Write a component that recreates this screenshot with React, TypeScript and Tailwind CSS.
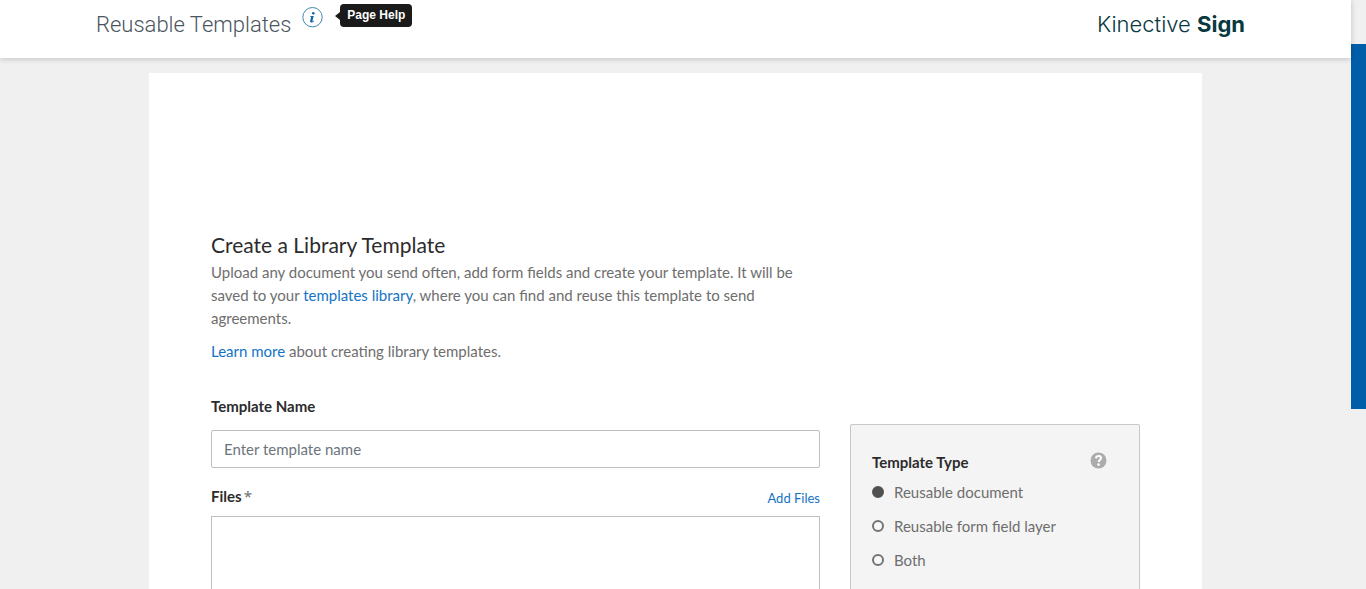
import { useState } from "react";

const templateTypes = [
  { id: "document", label: "Reusable document" },
  { id: "layer", label: "Reusable form field layer" },
  { id: "both", label: "Both" },
];

function Header() {
  return (
    <header className="relative z-10 flex h-[58px] shrink-0 items-start justify-between bg-white pr-[106px] pl-24 shadow-[0_1px_6px_rgba(0,0,0,0.2)]">
      <div className="flex items-start">
        <h1 className="pt-2 font-['Roboto',sans-serif] text-[22px] leading-[34px] font-light text-[#4a5560]">
          Reusable Templates
        </h1>
        <button type="button" aria-label="Page information" className="mt-[7px] ml-[11px]">
          <svg width="21" height="21" viewBox="0 0 21 21" fill="none" aria-hidden="true">
            <circle cx="10.5" cy="10.2" r="9.7" stroke="#4586ad" strokeWidth="1" />
            <circle cx="11.3" cy="6.3" r="1.3" fill="#0d65a5" />
            <path d="M8.4 9.1h3.3l-1.3 5c-.1.4.3.3 1.3-.6l.4.4c-1 1.2-1.9 1.6-2.8 1.6-1.1 0-1.4-.7-1.1-1.7l.9-3.6c.1-.4-.1-.5-.8-.5z" fill="#0d65a5" />
          </svg>
        </button>
        <div role="tooltip" className="mt-1 ml-3 flex items-center">
          <span className="h-0 w-0 border-y-4 border-r-[5px] border-y-transparent border-r-[#1a1a1a]" />
          <span className="rounded bg-[#1a1a1a] px-[7px] font-['Liberation_Sans',sans-serif] text-xs leading-[23px] font-bold text-white">
            Page Help
          </span>
        </div>
      </div>
      <div className="pt-2 font-['Inter',sans-serif] text-[22px] leading-8 text-[#07393f]">
        <span className="font-light">Kinective</span> <span className="font-bold">Sign</span>
      </div>
    </header>
  );
}

function TemplateTypePanel() {
  const [selected, setSelected] = useState("document");
  return (
    <fieldset className="h-60 w-[290px] shrink-0 rounded-xs border border-[#c8c8c8] bg-[#f4f4f4] pt-[25px] pr-8 pl-[21px]">
      <div className="flex items-start justify-between">
        <h3 className="text-[15px] leading-6 font-bold text-[#2c2c2c]">Template Type</h3>
        <button type="button" aria-label="Template type help" className="mt-0.5">
          <svg width="17" height="17" viewBox="0 0 17 17" fill="none" aria-hidden="true">
            <circle cx="8.5" cy="8.5" r="8" fill="#acacac" />
            <path d="M5.9 6.3C6.2 4.7 7.3 4 8.6 4c1.4 0 2.4.8 2.4 2.1 0 1.7-2.3 1.8-2.3 3.8" stroke="#fff" strokeWidth="2.1" />
            <circle cx="8.6" cy="12.6" r="1.3" fill="#fff" />
          </svg>
        </button>
      </div>
      <div className="mt-1.5 flex flex-col gap-[10px]">
        {templateTypes.map((type) => (
          <label key={type.id} className="flex items-center gap-[10px] text-[15px] leading-6 text-[#6e6e6e]">
            <input
              type="radio"
              name="template-type"
              checked={selected === type.id}
              onChange={() => setSelected(type.id)}
              className="h-3 w-3 appearance-none rounded-full border-2 border-[#747474] bg-[#f8f8f8] checked:border-[#505050] checked:bg-[#505050]"
            />
            {type.label}
          </label>
        ))}
      </div>
    </fieldset>
  );
}

export default function App() {
  return (
    <div className="flex h-screen overflow-hidden bg-[#f0f0f0] font-['Lato','Noto_Sans',sans-serif] text-[#6e6e6e]">
      <div className="flex min-w-0 flex-1 flex-col">
        <Header />
        <main className="mx-auto mt-[15px] w-full max-w-[1053px] flex-1 bg-white px-[62px] pt-[157px]">
          <section className="max-w-[590px] text-[15px] leading-[23px]">
            <h2 className="mb-0.5 text-[21px] leading-[29px] text-[#2c2c2c]">Create a Library Template</h2>
            <p>
              Upload any document you send often, add form fields and create your template. It will be saved to your{" "}
              <a href="#library" className="text-[#1473c6]">templates library</a>, where you can find and reuse this
              template to send agreements.
            </p>
            <p className="mt-[10px]">
              <a href="#learn" className="text-[#1473c6]">Learn more</a> about creating library templates.
            </p>
          </section>

          <form className="mt-[31px] flex items-start gap-[30px]">
            <div className="min-w-0 flex-1">
              <label htmlFor="template-name" className="block text-[15px] leading-6 font-bold text-[#2c2c2c]">
                Template Name
              </label>
              <input
                id="template-name"
                type="text"
                placeholder="Enter template name"
                className="mt-3 block h-[38px] w-full rounded-xs border border-[#bebebe] bg-white px-3 text-[15px] placeholder:text-[#6c757d]"
              />
              <div className="mt-4 flex items-start justify-between">
                <h3 className="text-[15px] leading-6 font-bold text-[#2c2c2c]">
                  Files<span className="ml-0.5 font-['Noto_Sans',sans-serif] font-normal text-[#6e6e6e]">*</span>
                </h3>
                <button type="button" className="text-[13px] leading-7 text-[#1473c6]">Add Files</button>
              </div>
              <div className="mt-1 h-40 border border-[#bebebe] bg-white" />
            </div>
            <div className="pt-[30px]">
              <TemplateTypePanel />
            </div>
          </form>
        </main>
      </div>
      <div aria-hidden="true" className="w-[15px] shrink-0 pt-11">
        <div className="h-[365px] bg-[#005ea8]" />
      </div>
    </div>
  );
}
